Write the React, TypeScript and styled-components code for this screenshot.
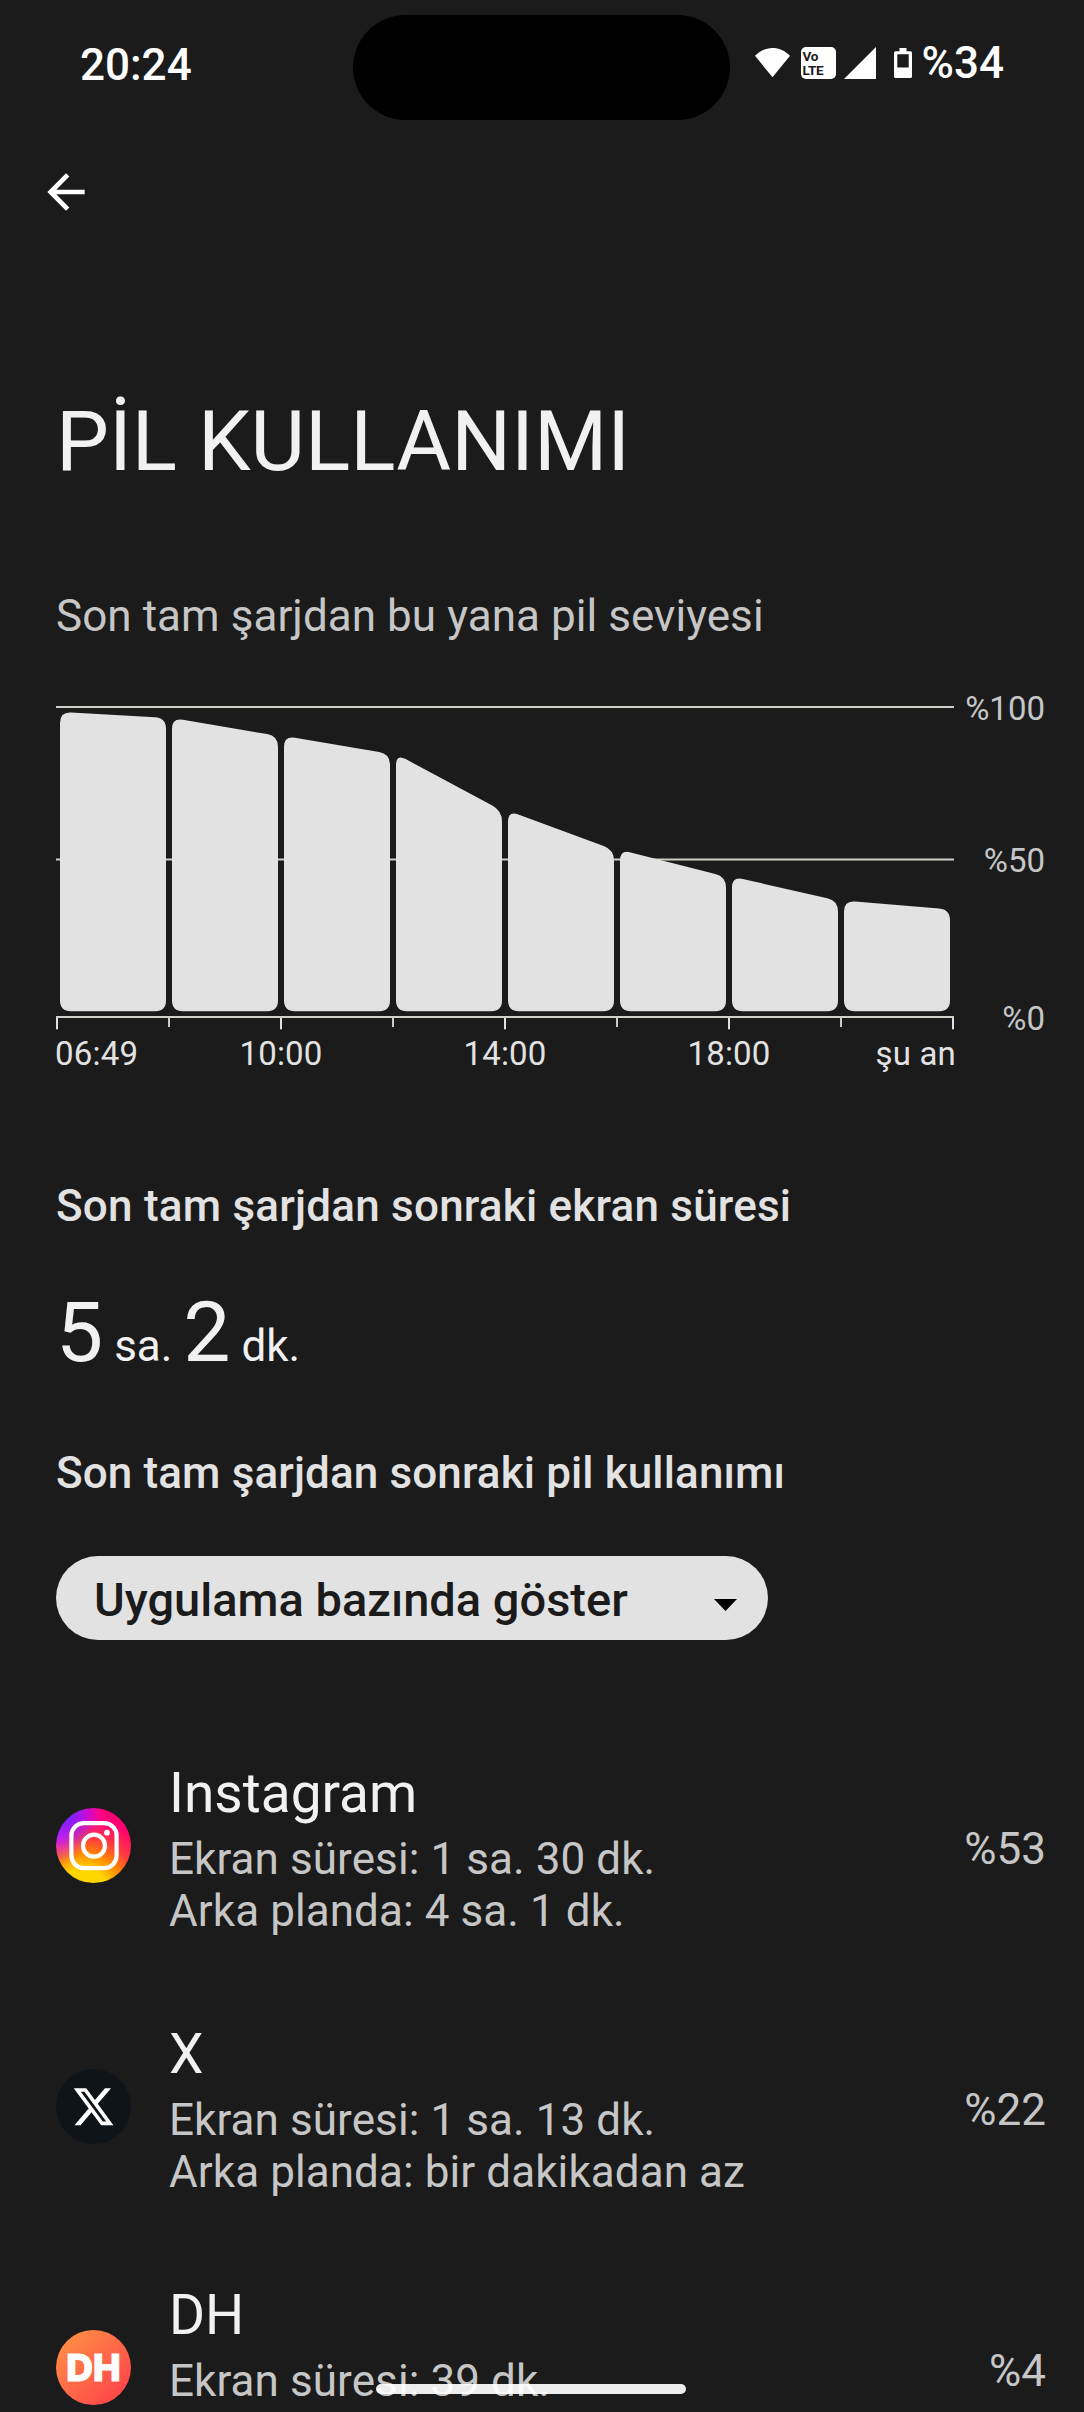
import React from 'react';
import styled, { createGlobalStyle } from 'styled-components';

const GlobalStyle = createGlobalStyle`
  html, body {
    margin: 0;
    padding: 0;
    background: #1b1b1b;
    overflow: hidden;
  }
  * { box-sizing: border-box; }
`;

const Screen = styled.div`
  position: relative;
  width: 1084px;
  height: 2412px;
  overflow: hidden;
  display: flex;
  flex-direction: column;
  background: #1b1b1b;
  color: #f1f1f1;
  font-family: Roboto, 'Noto Sans', sans-serif;
  white-space: nowrap;
`;

const StatusBar = styled.header`
  flex: none;
  display: flex;
  justify-content: space-between;
  height: 130px;
  padding: 0 80px;
  align-items: center;
  color: #fff;
  font-size: 44px;
  font-weight: 500;
  line-height: 52px;
`;

const StatusIcons = styled.div`
  display: flex;
  align-items: center;
  margin-bottom: 4px;
`;

const Glyph = styled.svg<{ $gap: number }>`
  display: block;
  flex: none;
  margin-right: ${(p) => p.$gap}px;
`;

const VolteBadge = styled.div`
  width: 35px;
  height: 32px;
  margin-right: 8px;
  padding: 2px 0 0 2px;
  border-radius: 5px;
  background: #fff;
  color: #1b1b1b;
  font-size: 13.5px;
  font-weight: 700;
  line-height: 14px;
  letter-spacing: -0.4px;
  display: flex;
  flex-direction: column;
`;

const CameraIsland = styled.div`
  position: absolute;
  left: 353px;
  top: 15px;
  width: 377px;
  height: 105px;
  border-radius: 53px;
  background: #000;
`;

const AppBar = styled.nav`
  flex: none;
  height: 262px;
  padding: 34px 0 0 38px;
`;

const BackButton = styled.button`
  display: block;
  width: 56px;
  height: 56px;
  padding: 0;
  border: 0;
  background: none;
  color: #fff;
`;

const PageTitle = styled.h1`
  margin: 0 0 98px 56px;
  font-size: 84px;
  font-weight: 400;
  line-height: 100px;
`;

const Caption = styled.p`
  margin: 0 0 47px 56px;
  color: #c6c6c6;
  font-size: 44px;
  line-height: 52px;
  letter-spacing: 0.05px;
`;

const ChartBlock = styled.section`
  display: grid;
  grid-template-columns: 898px 91px;
  height: 385px;
  margin: 0 0 106px 56px;
`;

const Plot = styled.div`
  padding-top: 17px;
`;

const PlotSvg = styled.svg`
  display: block;
`;

const TimeAxis = styled.div`
  display: grid;
  grid-template-columns: 114px repeat(3, 224px) 115px;
  margin: 4px -2px 0 -1px;
  color: #e2e2e2;
  font-size: 33px;
  line-height: 40px;
  letter-spacing: 0.2px;
`;

const TimeLabel = styled.span<{ $align: 'start' | 'center' | 'end' }>`
  justify-self: ${(p) => p.$align};
`;

const LevelAxis = styled.div`
  display: flex;
  flex-direction: column;
  align-items: flex-end;
  color: #c6c6c6;
  font-size: 33px;
  line-height: 40px;
`;

const LevelLabel = styled.span<{ $gap: number }>`
  margin-top: ${(p) => p.$gap}px;
`;

const Heading = styled.h2<{ $gap: number; $tracking: number }>`
  margin: 0 0 ${(p) => p.$gap}px 56px;
  color: #e2e2e2;
  font-size: 44px;
  font-weight: 500;
  line-height: 52px;
  letter-spacing: ${(p) => p.$tracking}px;
`;

const ScreenTime = styled.p`
  height: 100px;
  margin: 0 0 64px 56px;
  font-size: 84px;
  line-height: 100px;
`;

const Unit = styled.span`
  font-size: 44px;
`;

const Dropdown = styled.button`
  flex: none;
  display: flex;
  align-items: center;
  justify-content: space-between;
  width: 712px;
  height: 84px;
  margin: 0 0 78px 56px;
  padding: 4px 31px 0 38px;
  border: 0;
  border-radius: 42px;
  background: #e2e2e2;
  color: #1b1b1b;
  font: 500 47px/56px Roboto, 'Noto Sans', sans-serif;
`;

const DropdownArrow = styled.svg`
  display: block;
  margin-top: 10px;
`;

const AppRow = styled.article`
  flex: none;
  display: flex;
  align-items: center;
  height: 261px;
  padding: 0 38px 0 56px;
`;

const AppIcon = styled.div`
  display: flex;
  align-items: center;
  justify-content: center;
  width: 75px;
  height: 75px;
  margin: 0 38px 6px 0;
  border-radius: 50%;
  overflow: hidden;
`;

const InstagramIcon = styled(AppIcon)`
  background:
    radial-gradient(circle at 12% 8%, #6a28ff 0%, rgba(122, 32, 255, 0.8) 12%, rgba(200, 20, 255, 0) 36%),
    radial-gradient(circle at 2% 36%, rgba(220, 30, 255, 0.95) 0%, rgba(230, 20, 230, 0) 34%),
    radial-gradient(circle at 36% 116%, #ffd600 0%, #ffd600 26%, #ff8a00 42%, #ff3a40 58%, rgba(255, 0, 105, 0) 78%),
    linear-gradient(75deg, #ff00d8 0%, #ff00c8 42%, #ff0078 72%, #ff0069 100%);
`;

const XIcon = styled(AppIcon)`
  background: #0f1419;
`;

const DhIcon = styled(AppIcon)`
  background: linear-gradient(135deg, #ff9044 8%, #ff4b4a 82%);
  color: #fff;
  font-family: Inter, Roboto, sans-serif;
  font-size: 37px;
  font-weight: 800;
  line-height: 75px;
  -webkit-text-stroke: 1.2px #fff;
`;

const AppText = styled.div`
  flex: 1;
  display: flex;
  flex-direction: column;
`;

const AppName = styled.h3`
  margin: 0 0 7px;
  font-size: 55px;
  font-weight: 400;
  line-height: 66px;
`;

const AppDetail = styled.span`
  color: #c6c6c6;
  font-size: 44px;
  line-height: 52px;
  letter-spacing: 0.08px;
`;

const AppPercent = styled.span`
  color: #c6c6c6;
  font-size: 44px;
  line-height: 52px;
`;

const HomeIndicator = styled.div`
  position: absolute;
  left: 376px;
  top: 2384px;
  width: 310px;
  height: 10px;
  border-radius: 5px;
  background: rgba(255, 255, 255, 0.92);
`;

const levels = [100, 98, 92, 86, 67, 54, 45, 37, 34];
const BASE_Y = 305.3;
const yFor = (level: number) => BASE_Y - 2.993 * level;

type Point = [number, number];

/* Closed outline whose corners are softened by a quadratic curve. */
function softPath(points: Point[], radius: number): string {
  const toward = (a: Point, b: Point): Point => {
    const d = Math.hypot(b[0] - a[0], b[1] - a[1]);
    return [a[0] + ((b[0] - a[0]) * radius) / d, a[1] + ((b[1] - a[1]) * radius) / d];
  };
  return (
    points
      .map((p, i) => {
        const prev = points[(i + points.length - 1) % points.length];
        const next = points[(i + 1) % points.length];
        const s = toward(p, prev);
        const e = toward(p, next);
        return `${i ? 'L' : 'M'}${s[0]} ${s[1]}Q${p[0]} ${p[1]} ${e[0]} ${e[1]}`;
      })
      .join('') + 'Z'
  );
}

function BatteryPlot() {
  return (
    <PlotSvg width="898" height="324" viewBox="0 0 898 324">
      <rect x="0" y="0" width="898" height="2" fill="#cfcec6" />
      <rect x="0" y="152.500" width="898" height="2" fill="#cfcec6" />
      {levels.slice(0, -1).map((level, i) => {
        const x = 4 + i * 112;
        return (
          <path
            key={i}
            fill="#e2e2e2"
            d={softPath(
              [
                [x, yFor(level)],
                [x + 106, yFor(levels[i + 1])],
                [x + 106, BASE_Y],
                [x, BASE_Y],
              ],
              11,
            )}
          />
        );
      })}
      <rect x="0" y="310" width="898" height="2" fill="#d2d1ca" />
      {levels.map((_, i) => (
        <rect
          key={i}
          x={i * 112}
          y="312"
          width="2"
          height={i % 2 ? 9 : 11.3}
          fill={i % 2 ? '#cfcec6' : '#e2e2e2'}
        />
      ))}
    </PlotSvg>
  );
}

function InstagramMark() {
  return (
    <svg width="75" height="75" viewBox="0 0 75 75" fill="none" stroke="#fff" strokeWidth="4.2">
      <rect x="15.4" y="15.1" width="45.2" height="45" rx="12.5" />
      <circle cx="38" cy="37.7" r="11" />
      <circle cx="51" cy="24.7" r="2.9" fill="#fff" stroke="none" />
    </svg>
  );
}

function XMark() {
  return (
    <svg width="75" height="75" viewBox="0 0 75 75">
      <path
        transform="translate(15.4 14.9) scale(1.84 1.9)"
        fill="#fff"
        d="M18.244 2.25h3.308l-7.227 8.26 8.502 11.24H16.17l-5.214-6.817L4.99 21.75H1.68l7.73-8.835L1.254 2.25H8.08l4.713 6.231zm-1.161 17.52h1.833L7.084 4.126H5.117z"
      />
    </svg>
  );
}

const apps = [
  {
    name: 'Instagram',
    icon: <InstagramIcon><InstagramMark /></InstagramIcon>,
    details: ['Ekran süresi: 1 sa. 30 dk.', 'Arka planda: 4 sa. 1 dk.'],
    percent: '%53',
  },
  {
    name: 'X',
    icon: <XIcon><XMark /></XIcon>,
    details: ['Ekran süresi: 1 sa. 13 dk.', 'Arka planda: bir dakikadan az'],
    percent: '%22',
  },
  {
    name: 'DH',
    icon: <DhIcon>DH</DhIcon>,
    details: ['Ekran süresi: 39 dk.', '\u00a0'],
    percent: '%4',
  },
];

export default function App() {
  return (
    <>
      <GlobalStyle />
      <Screen>
        <StatusBar>
          <span>20:24</span>
          <StatusIcons>
            <Glyph $gap={11} width="35" height="30" viewBox="0 0 35 30" fill="#fff">
              <path d="M0 7.8C10-2.6 25-2.6 35 7.8L17.5 29.3Z" />
            </Glyph>
            <VolteBadge>
              <span>Vo</span>
              <span>LTE</span>
            </VolteBadge>
            <Glyph $gap={18} width="32" height="32" viewBox="0 0 32 32" fill="#fff">
              <path d="M0 32 32 0V32Z" />
            </Glyph>
            <Glyph $gap={10} width="18" height="30" viewBox="0 0 18 30" fill="#fff">
              <path
                fillRule="evenodd"
                d="M5.5 0h7v3.2H16.5q1.5 0 1.5 1.5V28.5q0 1.5-1.5 1.5H1.5q-1.5 0-1.5-1.5V4.7q0-1.5 1.5-1.5H5.5ZM3.3 6.3V19.5H14.7V6.3Z"
              />
            </Glyph>
            <span>%34</span>
          </StatusIcons>
        </StatusBar>

        <AppBar>
          <BackButton aria-label="Geri">
            <svg width="56" height="56" viewBox="0 0 24 24" fill="currentColor">
              <path d="M20 11H7.83l5.59-5.59L12 4l-8 8 8 8 1.41-1.41L7.83 13H20v-2z" />
            </svg>
          </BackButton>
        </AppBar>

        <PageTitle>PİL KULLANIMI</PageTitle>
        <Caption>Son tam şarjdan bu yana pil seviyesi</Caption>

        <ChartBlock>
          <Plot>
            <BatteryPlot />
            <TimeAxis>
              <TimeLabel $align="start">06:49</TimeLabel>
              <TimeLabel $align="center">10:00</TimeLabel>
              <TimeLabel $align="center">14:00</TimeLabel>
              <TimeLabel $align="center">18:00</TimeLabel>
              <TimeLabel $align="end">şu an</TimeLabel>
            </TimeAxis>
          </Plot>
          <LevelAxis>
            <LevelLabel $gap={0}>%100</LevelLabel>
            <LevelLabel $gap={112}>%50</LevelLabel>
            <LevelLabel $gap={118}>%0</LevelLabel>
          </LevelAxis>
        </ChartBlock>

        <Heading $gap={51} $tracking={0.22}>Son tam şarjdan sonraki ekran süresi</Heading>
        <ScreenTime>
          5<Unit> sa. </Unit>2<Unit> dk.</Unit>
        </ScreenTime>
        <Heading $gap={57} $tracking={0.12}>Son tam şarjdan sonraki pil kullanımı</Heading>

        <Dropdown>
          <span>Uygulama bazında göster</span>
          <DropdownArrow width="23" height="12" viewBox="0 0 23 12">
            <path d="M0 0H23L11.5 12Z" fill="#000" />
          </DropdownArrow>
        </Dropdown>

        {apps.map((app) => (
          <AppRow key={app.name}>
            {app.icon}
            <AppText>
              <AppName>{app.name}</AppName>
              {app.details.map((line) => (
                <AppDetail key={line}>{line}</AppDetail>
              ))}
            </AppText>
            <AppPercent>{app.percent}</AppPercent>
          </AppRow>
        ))}

        <CameraIsland />
        <HomeIndicator />
      </Screen>
    </>
  );
}
